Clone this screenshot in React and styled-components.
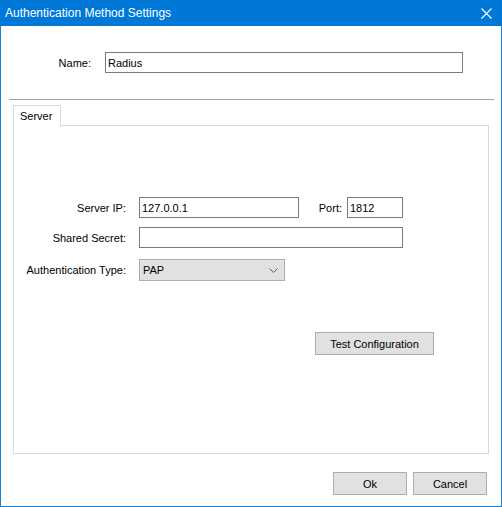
import React from 'react';
import styled, { createGlobalStyle } from 'styled-components';

const Global = createGlobalStyle`
  html, body { margin: 0; padding: 0; background: #fff; }
  * { box-sizing: border-box; }
  body { font-family: "Liberation Sans", Arial, sans-serif; font-size: 11px; color: #000; }
`;

const Window = styled.div`
  width: 502px;
  height: 507px;
  display: flex;
  flex-direction: column;
  background: #fff;
  border: 1px solid #1a82d6;
  border-top: none;
`;

const TitleBar = styled.div`
  height: 26px;
  margin: 0 -1px;
  background: #0078d7;
  color: #fff;
  font-size: 12px;
  display: flex;
  align-items: center;
  justify-content: space-between;
  padding: 0 10px 0 5px;
`;

const NameRow = styled.div`
  margin-top: 26px;
  display: flex;
  align-items: center;
`;

const Label = styled.span`
  width: ${(p) => p.$w}px;
  text-align: right;
  flex-shrink: 0;
`;

const TextBox = styled.div`
  width: ${(p) => p.$w}px;
  height: 21px;
  border: 1px solid #7a7a7a;
  background: #fff;
  margin-left: ${(p) => p.$ml || 0}px;
  padding-left: 2px;
  display: flex;
  align-items: center;
  flex-shrink: 0;
`;

const Separator = styled.div`
  margin: 26px 7px 0 8px;
  height: 1px;
  background: #a0a0a0;
`;

const TabStrip = styled.div`
  margin: 5px 0 0 12px;
  display: flex;
  height: 20px;
`;

const Tab = styled.div`
  width: 48px;
  height: 21px;
  border: 1px solid #d9d9d9;
  border-bottom: none;
  background: #fff;
  padding-left: 6px;
  display: flex;
  align-items: center;
  position: relative;
  z-index: 1;
`;

const Panel = styled.div`
  margin-left: 12px;
  width: 476px;
  height: 329px;
  border: 1px solid #d9d9d9;
  display: flex;
  flex-direction: column;
  padding-top: 71px;
`;

const FormRow = styled.div`
  display: flex;
  align-items: center;
  margin-top: ${(p) => p.$mt || 0}px;
`;

const Select = styled.div`
  width: 146px;
  height: 22px;
  margin-left: 13px;
  border: 1px solid #adadad;
  background: #e1e1e1;
  display: flex;
  align-items: center;
  justify-content: space-between;
  padding: 0 6px 0 3px;
`;

const Button = styled.div`
  width: ${(p) => p.$w}px;
  height: 23px;
  border: 1px solid #adadad;
  background: #e1e1e1;
  display: flex;
  align-items: center;
  justify-content: center;
  margin-left: ${(p) => p.$ml || 0}px;
`;

const Footer = styled.div`
  margin-top: 18px;
  display: flex;
  justify-content: flex-end;
  gap: 6px;
  padding-right: 14px;
`;

export default function App() {
  return (
    <>
      <Global />
      <Window>
        <TitleBar>
          <span>Authentication Method Settings</span>
          <svg width="11" height="11" viewBox="0 0 11 11">
            <path d="M0.5 0.5 L10.5 10.5 M10.5 0.5 L0.5 10.5" stroke="#fff" strokeWidth="1.1" />
          </svg>
        </TitleBar>

        <NameRow>
          <Label $w={90}>Name:</Label>
          <TextBox $w={358} $ml={14}>Radius</TextBox>
        </NameRow>

        <Separator />

        <TabStrip>
          <Tab>Server</Tab>
        </TabStrip>
        <Panel>
          <FormRow>
            <Label $w={112}>Server IP:</Label>
            <TextBox $w={160} $ml={13}>127.0.0.1</TextBox>
            <Label $w={43}>Port:</Label>
            <TextBox $w={56} $ml={5}>1812</TextBox>
          </FormRow>
          <FormRow $mt={9}>
            <Label $w={112}>Shared Secret:</Label>
            <TextBox $w={264} $ml={13} />
          </FormRow>
          <FormRow $mt={11}>
            <Label $w={112}>Authentication Type:</Label>
            <Select>
              <span>PAP</span>
              <svg width="9" height="5" viewBox="0 0 9 5">
                <path d="M0.5 0.5 L4.5 4.5 L8.5 0.5" stroke="#606060" fill="none" strokeWidth="1" />
              </svg>
            </Select>
          </FormRow>
          <FormRow $mt={51}>
            <Button $w={119} $ml={301}>Test Configuration</Button>
          </FormRow>
        </Panel>

        <Footer>
          <Button $w={74}>Ok</Button>
          <Button $w={74}>Cancel</Button>
        </Footer>
      </Window>
    </>
  );
}
